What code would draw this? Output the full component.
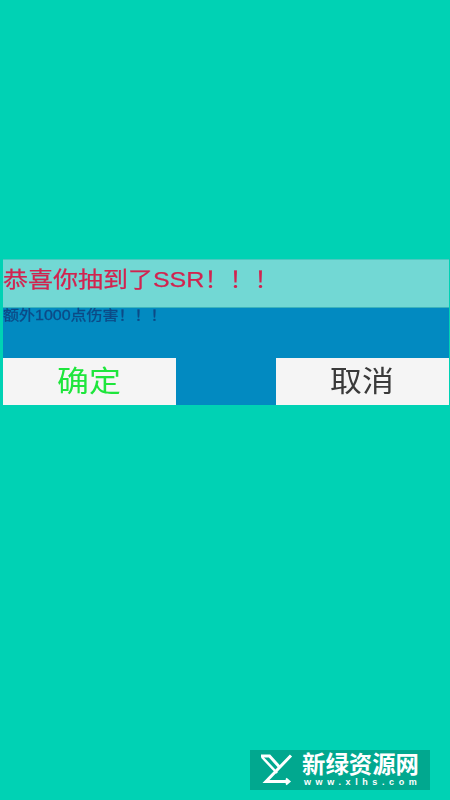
<div class="screen">
  <div class="dialog">
    <div class="title"><span class="wide">恭喜你抽到了SSR！！！</span></div>
    <div class="body">
      <div class="message"><span class="wide">额外1000点伤害！！！</span></div>
      <div class="buttons">
        <div class="btn ok"><span class="wide">确定</span></div>
        <div class="btn cancel"><span class="wide">取消</span></div>
      </div>
    </div>
  </div>
  <div class="badge">
    <svg class="logo" viewBox="0 0 36 32" width="36" height="32" fill="none" stroke="#fff" stroke-width="2">
      <path d="M1 2H9.500L19 12.500" stroke-width="3" />
      <path d="M31 1.500L6 27.500H28" stroke-width="3" />
      <path d="M2 3L17 19" stroke-width="2.500" />
      <path d="M26 24.500L29.500 27.500L26 30.500" stroke-width="2" />
    </svg>
    <div class="brand">
      <div class="cn">新绿资源网</div>
      <div class="url">www.xlhs.com</div>
    </div>
  </div>
</div>

<style>
  :global(body) { margin: 0; }
  .screen {
    width: 450px;
    height: 800px;
    background: #00d2b4;
    display: flex;
    flex-direction: column;
    position: relative;
    overflow: hidden;
    font-family: "Liberation Sans", "Noto Sans CJK SC", sans-serif;
    padding-top: 259px;
    box-sizing: border-box;
  }
  .dialog {
    margin-left: 3px;
    display: flex;
    flex-direction: column;
    width: 446px;
    filter: blur(0.35px);
  }
  .wide { display: inline-block; white-space: nowrap; }
  .title {
    height: 49px;
    box-sizing: border-box;
    background: #72d8d4;
    border-top: 1px solid #4cc8c0;
    border-bottom: 1px solid #3cb4bc;
    color: #d2234f;
    font-size: 22px;
    line-height: 40px;
    white-space: nowrap;
  }
  .title .wide { transform: scaleX(1.136); transform-origin: left center; -webkit-text-stroke: 0.25px #d2234f; }
  .body {
    background: #028ac1;
    height: 97px;
    display: flex;
    flex-direction: column;
    justify-content: space-between;
  }
  .message {
    font-size: 14px;
    line-height: 15px;
    color: #0d4a86;
  }
  .message .wide { transform: scaleX(1.143); transform-origin: left center; -webkit-text-stroke: 0.3px #0d4a86; }
  .buttons {
    display: flex;
    justify-content: space-between;
  }
  .btn {
    width: 173px;
    height: 47px;
    background: #f5f5f5;
    font-size: 29px;
    line-height: 49px;
    text-align: center;
  }
  .btn .wide { transform: scaleX(1.1); transform-origin: center; }
  .ok { color: #1ee63c; }
  .cancel { color: #3a3a3a; }
  .badge {
    position: absolute;
    left: 250px;
    top: 750px;
    width: 180px;
    height: 40px;
    background: #01a88f;
    display: flex;
    align-items: center;
    gap: 6px;
    padding-left: 10px;
    box-sizing: border-box;
  }
  .brand { color: #fff; display: flex; flex-direction: column; }
  .cn { font-size: 23.4px; line-height: 24px; font-weight: 700; white-space: nowrap; }
  .url { font-size: 9px; line-height: 10px; font-weight: 700; letter-spacing: 4.6px; padding-left: 2px; white-space: nowrap; }
</style>
